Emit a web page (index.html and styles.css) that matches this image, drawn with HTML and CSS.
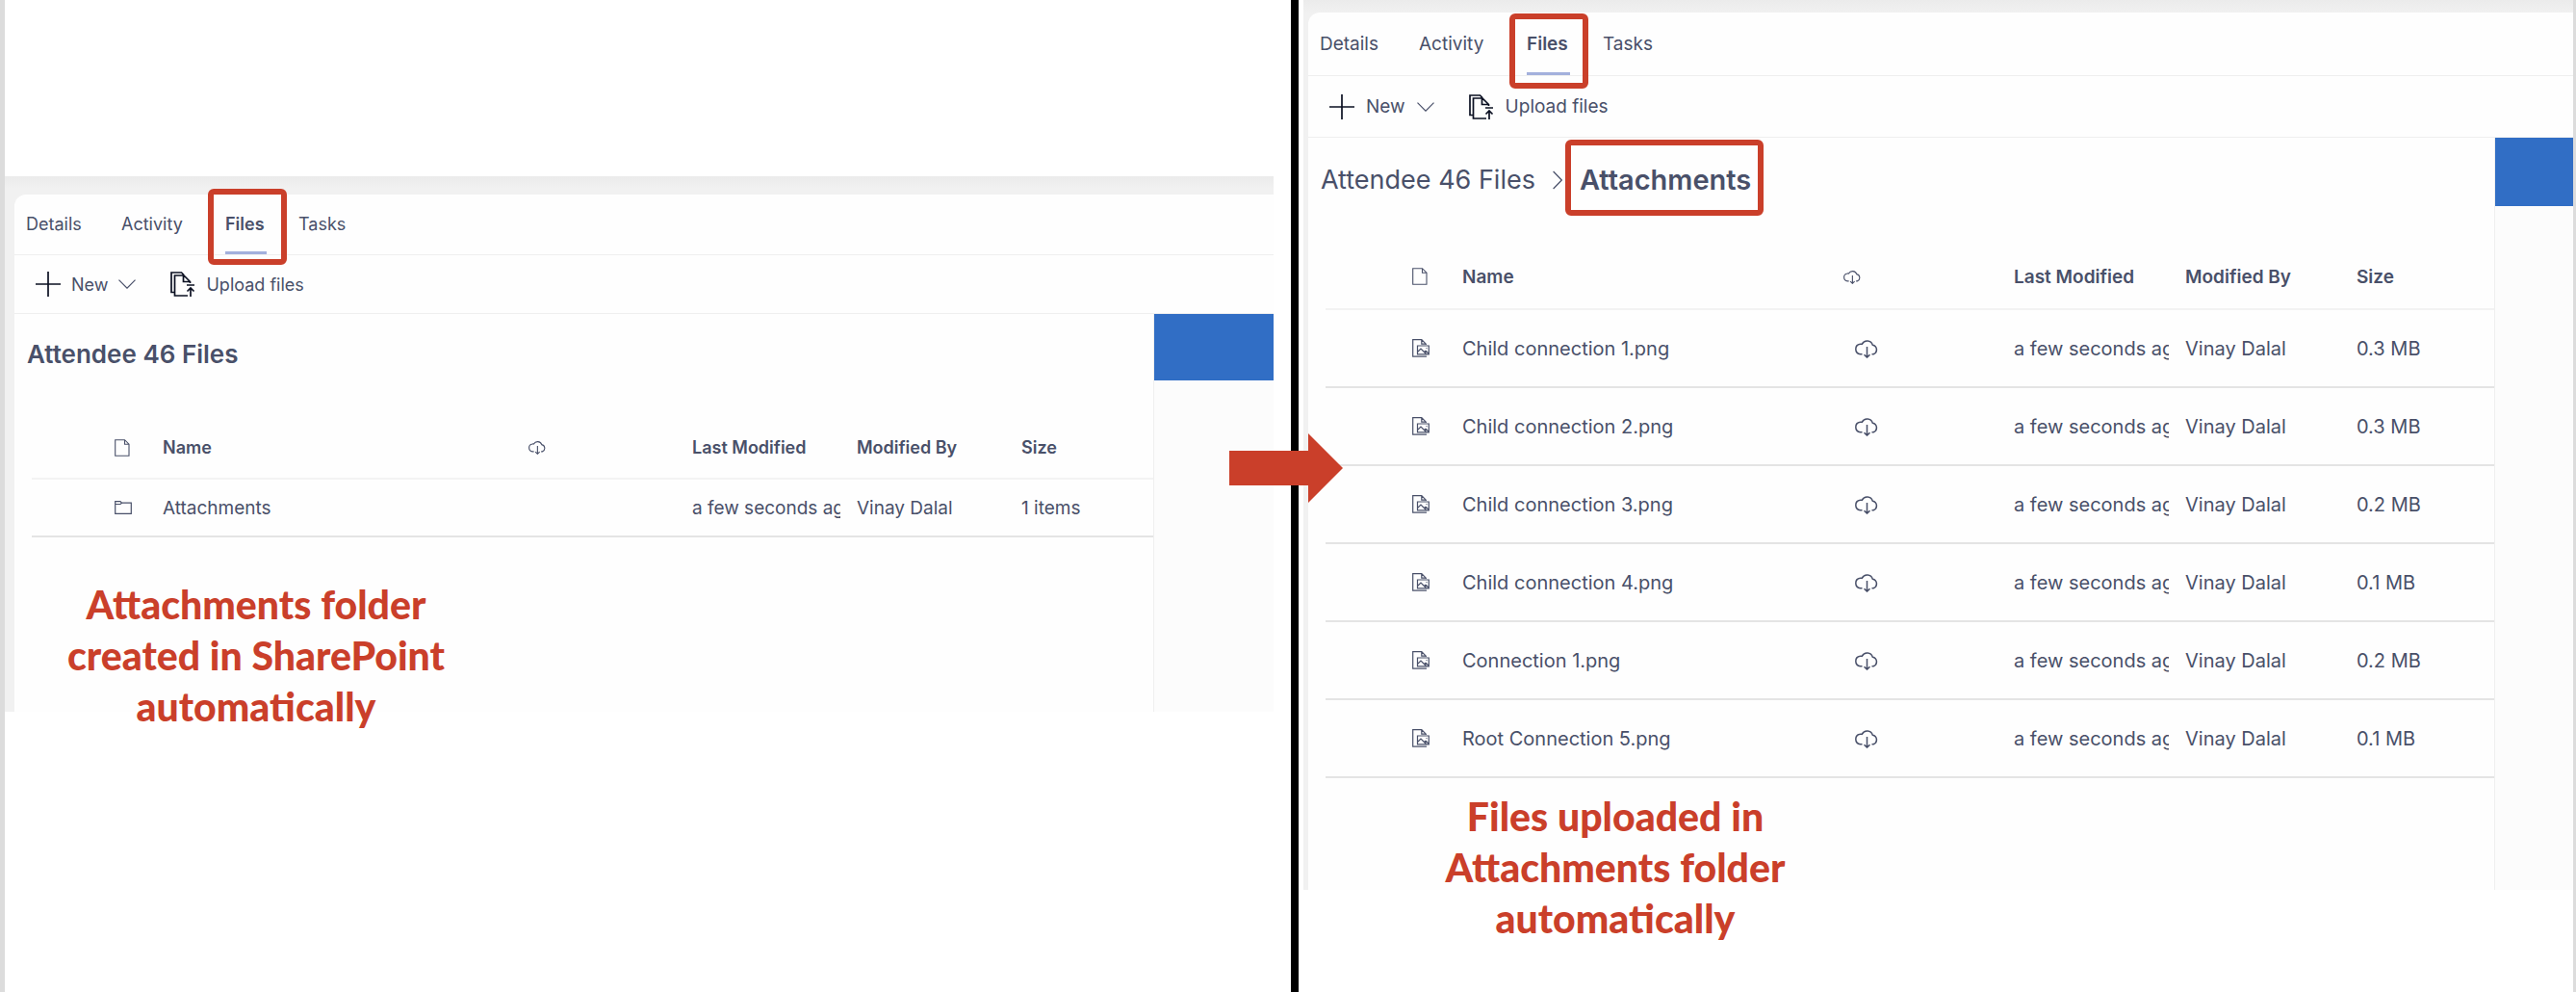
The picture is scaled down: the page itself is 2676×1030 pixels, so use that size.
FILE: index.html
```html
<!DOCTYPE html>
<html lang="en">
<head>
<meta charset="utf-8">
<title>Attendee 46 Files</title>
<link rel="stylesheet" href="styles.css">
</head>
<body>
<svg class="sprite" aria-hidden="true">
  <symbol id="plus" viewBox="0 0 26 26"><path d="M13 0V26M0 13H26" fill="none" stroke="currentColor" stroke-width="1.7"/></symbol>
  <symbol id="chevron" viewBox="0 0 18 10"><path d="M.5 .7 9 9.2 17.5 .7" fill="none" stroke="currentColor" stroke-width="1.2"/></symbol>
  <symbol id="next" viewBox="0 0 10 20"><path d="M.6 1 9.3 10 .6 19" fill="none" stroke="currentColor" stroke-width="1.2"/></symbol>
  <symbol id="upload" viewBox="0 0 26 26"><path d="M4.5 21.5H1V1H11.5L14 3.500M18 25H4.500V4H14L20.500 10.500V12M13.500 4V10.500H20.500M17 14H25M21 26V17M17.500 20.500 21 17 24.500 20.500" fill="none" stroke="currentColor" stroke-width="1.7"/></symbol>
  <symbol id="doc" viewBox="0 0 16 18"><path d="M.7 .7H10.500L15 5.200V17.300H.7ZM10.500 .7V5.200H15" fill="none" stroke="currentColor" stroke-width="1.100"/></symbol>
  <symbol id="folder" viewBox="0 0 18 14"><path d="M.7 13.300V.7H6L7.500 2.200H17.300V13.300ZM.7 3.500H6L7.500 2.200" fill="none" stroke="currentColor" stroke-width="1.200"/></symbol>
  <symbol id="image" viewBox="0 0 18 19"><path d="M15 18.200H.7V.7H9.800L14.300 5.200V6M9.800 .7V5.200H14.300M5.500 7H17.300V15.800H5.500ZM5.500 13.500 9 10 14.500 15.500M12.500 13.500 14 12.200 17.300 15.300M14.500 9.500H15.500" fill="none" stroke="currentColor" stroke-width="1.200"/></symbol>
  <symbol id="cloud" viewBox="0 0 26 20"><path d="M8.500 15.800H6.500A5.300 5.300 0 0 1 6.300 5.300C7.500 5 8.300 5.300 8.300 5.300A6 6 0 0 1 19.300 6.200 5 5 0 0 1 20.200 15.800H18.500M13.500 8V19M10.500 16.200 13.500 19.100 16.500 16.200" fill="none" stroke="currentColor" stroke-width="1.500"/></symbol>
</svg>

<main class="stage">
  <section class="slide slide-before">
    <div class="panel compact">
      <div class="card">
        <nav class="tabs">
          <button type="button">Details</button>
          <button type="button">Activity</button>
          <button type="button" class="active">Files<span class="mark"></span></button>
          <button type="button">Tasks</button>
        </nav>
        <div class="toolbar">
          <button type="button"><svg class="i-plus"><use href="#plus"/></svg>New<svg class="i-chevron"><use href="#chevron"/></svg></button>
          <button type="button"><svg class="i-upload"><use href="#upload"/></svg>Upload files</button>
        </div>
        <div class="content">
          <div class="library">
            <h1 class="crumbs"><span class="here">Attendee 46 Files</span></h1>
            <table class="files">
              <thead>
                <tr>
                  <th class="c-icon"><svg class="i-doc"><use href="#doc"/></svg></th>
                  <th>Name</th>
                  <th class="c-cloud"><svg class="i-cloud-sm"><use href="#cloud"/></svg></th>
                  <th class="c-date">Last Modified</th>
                  <th class="c-by">Modified By</th>
                  <th class="c-size">Size</th>
                </tr>
              </thead>
              <tbody>
                <tr><td class="c-icon"><svg class="i-folder"><use href="#folder"/></svg></td><td><a href="#attachments">Attachments</a></td><td></td><td><div class="clip">a few seconds ago</div></td><td>Vinay Dalal</td><td>1 items</td></tr>
              </tbody>
            </table>
          </div>
          <aside class="rail"><div class="rail-head"></div></aside>
        </div>
      </div>
    </div>
    <p class="caption">Attachments folder<br>created in SharePoint<br>automatically</p>
  </section>

  <div class="divider">
    <svg class="arrow" viewBox="0 0 118 72"><path d="M0 18H82V0L118 36 82 72V54H0Z" fill="#ca3f2a"/></svg>
  </div>

  <section class="slide slide-after" id="attachments">
    <div class="panel">
      <div class="card">
        <nav class="tabs">
          <button type="button">Details</button>
          <button type="button">Activity</button>
          <button type="button" class="active">Files<span class="mark"></span></button>
          <button type="button">Tasks</button>
        </nav>
        <div class="toolbar">
          <button type="button"><svg class="i-plus"><use href="#plus"/></svg>New<svg class="i-chevron"><use href="#chevron"/></svg></button>
          <button type="button"><svg class="i-upload"><use href="#upload"/></svg>Upload files</button>
        </div>
        <div class="content">
          <div class="library">
            <h1 class="crumbs"><a href="#root">Attendee 46 Files</a><svg class="i-next"><use href="#next"/></svg><span class="here">Attachments<span class="mark"></span></span></h1>
            <table class="files">
              <thead>
                <tr>
                  <th class="c-icon"><svg class="i-doc"><use href="#doc"/></svg></th>
                  <th>Name</th>
                  <th class="c-cloud"><svg class="i-cloud-sm"><use href="#cloud"/></svg></th>
                  <th class="c-date">Last Modified</th>
                  <th class="c-by">Modified By</th>
                  <th class="c-size">Size</th>
                </tr>
              </thead>
              <tbody>
                <tr><td class="c-icon"><svg class="i-image"><use href="#image"/></svg></td><td><a href="#f1">Child connection 1.png</a></td><td class="c-cloud"><svg class="i-cloud"><use href="#cloud"/></svg></td><td><div class="clip">a few seconds ago</div></td><td>Vinay Dalal</td><td>0.3 MB</td></tr>
                <tr><td class="c-icon"><svg class="i-image"><use href="#image"/></svg></td><td><a href="#f2">Child connection 2.png</a></td><td class="c-cloud"><svg class="i-cloud"><use href="#cloud"/></svg></td><td><div class="clip">a few seconds ago</div></td><td>Vinay Dalal</td><td>0.3 MB</td></tr>
                <tr><td class="c-icon"><svg class="i-image"><use href="#image"/></svg></td><td><a href="#f3">Child connection 3.png</a></td><td class="c-cloud"><svg class="i-cloud"><use href="#cloud"/></svg></td><td><div class="clip">a few seconds ago</div></td><td>Vinay Dalal</td><td>0.2 MB</td></tr>
                <tr><td class="c-icon"><svg class="i-image"><use href="#image"/></svg></td><td><a href="#f4">Child connection 4.png</a></td><td class="c-cloud"><svg class="i-cloud"><use href="#cloud"/></svg></td><td><div class="clip">a few seconds ago</div></td><td>Vinay Dalal</td><td>0.1 MB</td></tr>
                <tr><td class="c-icon"><svg class="i-image"><use href="#image"/></svg></td><td><a href="#f5">Connection 1.png</a></td><td class="c-cloud"><svg class="i-cloud"><use href="#cloud"/></svg></td><td><div class="clip">a few seconds ago</div></td><td>Vinay Dalal</td><td>0.2 MB</td></tr>
                <tr><td class="c-icon"><svg class="i-image"><use href="#image"/></svg></td><td><a href="#f6">Root Connection 5.png</a></td><td class="c-cloud"><svg class="i-cloud"><use href="#cloud"/></svg></td><td><div class="clip">a few seconds ago</div></td><td>Vinay Dalal</td><td>0.1 MB</td></tr>
              </tbody>
            </table>
          </div>
          <aside class="rail"><div class="rail-head"></div></aside>
        </div>
      </div>
    </div>
    <p class="caption">Files uploaded in<br>Attachments folder<br>automatically</p>
  </section>
</main>
</body>
</html>
```

FILE: styles.css
```css
* { box-sizing: border-box; }

body {
  margin: 0;
  background: #fff;
  color: #495069;
  font-family: Inter, "Noto Sans", sans-serif;
}

.sprite { position: absolute; width: 0; height: 0; }

svg { display: block; flex: none; }

a { color: inherit; text-decoration: none; }

button {
  margin: 0;
  padding: 0;
  border: 0;
  background: none;
  color: inherit;
  font: inherit;
  text-align: left;
}

.stage {
  display: grid;
  grid-template-columns: minmax(0, 1336fr) 8px minmax(0, 1324fr);
  min-height: 100vh;
  border-left: 5px solid #dcdcdc;
  border-right: 3px solid #dcdcdc;
}

.slide { position: relative; }
.slide-before { padding: 183px 18px 0 0; }
.slide-after { padding-left: 5px; }

.divider { position: relative; background: #000; }

.arrow {
  position: absolute;
  left: -64px;
  top: 450px;
  z-index: 2;
  width: 118px;
  height: 72px;
}

.panel {
  --text: 19px;
  --cell: 20px;
  --title: 27px;
  --here: 29px;
  --tabs: 66px;
  --bar: 64px;
  --gap: 12px;
  --crumbs: 87px;
  --thead: 92px;
  --row: 81px;
  --tail: 116px;
  --tab-cols: 103px 112px 79px auto;
  --inset: 18px;
  --icon: 142px;
  --icon-pad: 90px;
  --col: 178px;
  --size: 143px;
  --rail: 82px;
  --rail-head: 71px;
  padding: 13px 0 0 5px;
  background: linear-gradient(#ebebeb, #f1f1f1 13px);
  font-size: var(--text);
}

.compact {
  --text: 18px;
  --cell: 19px;
  --here: 26px;
  --tabs: 63px;
  --bar: 61px;
  --gap: 11px;
  --crumbs: 83px;
  --thead: 89px;
  --row: 60px;
  --tail: 181px;
  --tab-cols: 99px 108px 76px auto;
  --icon: 136px;
  --icon-pad: 86px;
  --col: 171px;
  --size: 137px;
  --rail: 125px;
  --rail-head: 69px;
  padding: 19px 0 0 10px;
}

.card {
  background: #fefefe;
  border-top-left-radius: 12px;
}

.tabs {
  display: grid;
  grid-template-columns: var(--tab-cols);
  height: var(--tabs);
  padding-left: 12px;
  border-bottom: 1px solid #efefef;
}

.tabs button { position: relative; justify-self: start; }
.compact .tabs button { padding-bottom: 2px; }

.active { font-weight: 600; }

.active::after {
  content: "";
  position: absolute;
  left: 0;
  right: -2px;
  bottom: 0;
  height: 3px;
  background: #a3b0dc;
}

.mark {
  position: absolute;
  border: 6px solid #ca3f2a;
  border-radius: 6px;
}

.active .mark { left: -18px; top: 1px; width: 82px; height: 78px; }
.compact .active .mark { top: -6px; height: 79px; }

.toolbar {
  display: flex;
  align-items: center;
  gap: 36px;
  height: var(--bar);
  padding-left: 22px;
  border-bottom: 1px solid #efefef;
}

.toolbar button { display: flex; align-items: center; gap: var(--gap); }
.i-plus, .i-upload { color: #0b1022; width: 26px; height: 26px; }
.i-chevron { width: 18px; height: 10px; }

.content {
  display: grid;
  grid-template-columns: minmax(0, 1fr) var(--rail);
}

.library { padding-bottom: var(--tail); }

.rail { border-left: 1px solid #efefef; background: #fcfcfc; }
.rail-head { height: var(--rail-head); background: #316ec5; }

.crumbs {
  display: flex;
  align-items: center;
  gap: 18px;
  height: var(--crumbs);
  margin: 0;
  padding-left: 13px;
  font-size: var(--title);
  font-weight: 400;
}

.here { position: relative; font-size: var(--here); font-weight: 600; }
.here .mark { left: -15px; right: -13px; top: -24px; height: 79px; }
.i-next { width: 10px; height: 20px; }

.files {
  width: calc(100% - var(--inset));
  margin-left: var(--inset);
  border-collapse: separate;
  border-spacing: 0;
  table-layout: fixed;
}

.files th, .files td {
  height: var(--row);
  padding: 0;
  text-align: left;
  white-space: nowrap;
  border-bottom: 2px solid #e4e4e4;
}

.files td { font-size: var(--cell); }

.files th {
  height: var(--thead);
  padding-top: 24px;
  font-size: var(--text);
  font-weight: 600;
  border-bottom-color: #f3f3f3;
}

.files .c-icon { width: var(--icon); padding-left: var(--icon-pad); }
.c-cloud, .c-date, .c-by { width: var(--col); }
.c-size { width: var(--size); }
.files td.c-cloud { padding-left: 12px; }

.clip { margin-right: 17px; overflow: hidden; }

.i-doc { width: 16px; height: 18px; }
.i-folder { width: 18px; height: 14px; }
.i-image { width: 18px; height: 19px; }
.i-cloud-sm { width: 20px; height: 15px; }
.i-cloud { width: 26px; height: 20px; }

.caption {
  position: absolute;
  margin: 0;
  color: #ca3f2a;
  font: 900 41px/53px Lato, "Open Sans", sans-serif;
  text-align: center;
  white-space: nowrap;
}

.slide-before .caption { left: 60px; top: 601px; width: 402px; }
.slide-after .caption { left: 128px; top: 821px; width: 402px; }
```
